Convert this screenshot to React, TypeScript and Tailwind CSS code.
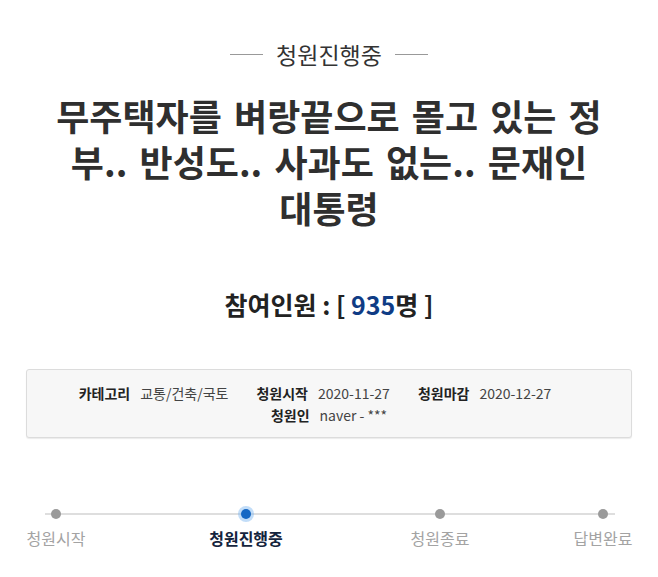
const steps = [
  { label: '청원시작', active: false, ml: 'ml-[16px]' },
  { label: '청원진행중', active: true, ml: 'ml-[110px]' },
  { label: '청원종료', active: false, ml: 'ml-[114px]' },
  { label: '답변완료', active: false, ml: 'ml-[83px]' },
];

function InfoItem({ label, value }: { label: string; value: string }) {
  return (
    <div className="flex items-center gap-[10px]">
      <span className="font-bold text-[#222]">{label}</span>
      <span className="text-[#444]">{value}</span>
    </div>
  );
}

export default function App() {
  return (
    <div className="w-[658px] h-[577px] bg-white pt-[40px] font-['Noto_Sans_CJK_KR','Noto_Sans',sans-serif] text-[#333]">
      <div className="flex items-center justify-center gap-[13px]">
        <span className="w-[33px] h-px bg-[#999]" />
        <span className="text-[23px] leading-[28px] text-[#333]">청원진행중</span>
        <span className="w-[33px] h-px bg-[#999]" />
      </div>

      <h1 className="mt-[24px] text-center text-[36px] leading-[46px] font-bold [word-spacing:4px] text-[#2f2f2f]">
        무주택자를 벼랑끝으로 몰고 있는 정<br />
        부.. 반성도.. 사과도 없는.. 문재인<br />
        대통령
      </h1>

      <div className="mt-[58px] text-center text-[25px] leading-[32px] font-bold text-[#222]">
        참여인원 : [ <span className="text-[#0f3c85]">935</span>명 ]
      </div>

      <div className="mt-[49px] mx-[26px] h-[69px] border border-[#dcdcdc] rounded-[3px] bg-[#f7f7f7] shadow-[0_1px_1px_rgba(0,0,0,0.08)] pt-[12px] text-[14px] leading-[22px]">
        <div className="flex justify-center gap-[28px] pr-[28px]">
          <InfoItem label="카테고리" value="교통/건축/국토" />
          <InfoItem label="청원시작" value="2020-11-27" />
          <InfoItem label="청원마감" value="2020-12-27" />
        </div>
        <div className="flex justify-center">
          <InfoItem label="청원인" value="naver - ***" />
        </div>
      </div>

      <div className="relative mt-[71px]">
        <div className="absolute left-[45px] right-[43px] top-[4px] h-[2px] bg-[#dedede]" />
        <div className="relative flex">
          {steps.map((s) => (
            <div key={s.label} className={`${s.ml} w-[80px] flex flex-col items-center`}>
              {s.active ? (
                <span className="w-[10px] h-[10px] rounded-full bg-[#1467c4] shadow-[0_0_0_3px_rgba(120,180,240,0.45)]" />
              ) : (
                <span className="w-[10px] h-[10px] rounded-full bg-[#9a9a9a]" />
              )}
              <span
                className={`mt-[7px] text-[16px] leading-[24px] whitespace-nowrap ${
                  s.active ? 'font-bold text-[#14243d]' : 'text-[#a3a3a3]'
                }`}
              >
                {s.label}
              </span>
            </div>
          ))}
        </div>
      </div>
    </div>
  );
}
